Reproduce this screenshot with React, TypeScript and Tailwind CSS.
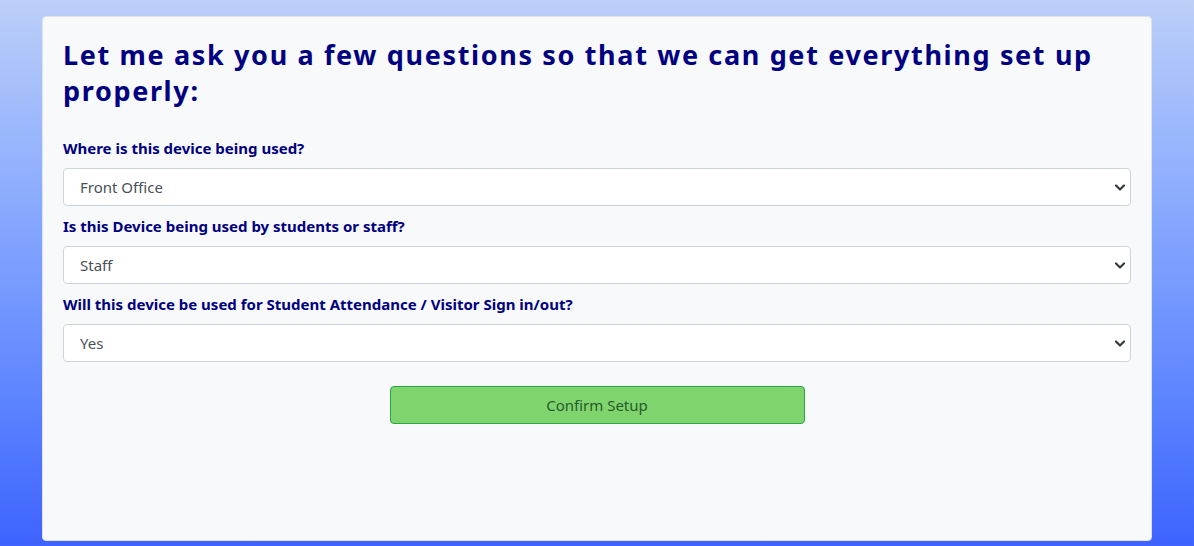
import React from "react";

const Chevron = () => (
  <svg width="12" height="9" viewBox="0 0 12 9" className="shrink-0">
    <path d="M2 2.5l4 4 4-4" fill="none" stroke="#343a40" strokeWidth="2.2" strokeLinecap="round" strokeLinejoin="round" />
  </svg>
);

const Field = ({ label, value }: { label: string; value: string }) => (
  <div className="flex flex-col">
    <div className="text-[15px] font-bold text-[#000080] leading-[22px] mb-[9px]">{label}</div>
    <div className="h-[38px] flex items-center justify-between bg-white border border-[#ced4da] rounded-[4px] pl-[16px] pr-[4px]">
      <span className="text-[15px] text-[#495057]">{value}</span>
      <Chevron />
    </div>
  </div>
);

export default function App() {
  return (
    <div
      className="w-[1194px] h-[546px] overflow-hidden bg-gradient-to-b from-[#bccff8] to-[#3f62ff] px-[42px] pt-[16px]"
      style={{ fontFamily: '"Noto Sans", "Open Sans", sans-serif' }}
    >
      <div className="h-[525px] bg-[#f8f9fa] border border-[#dee2e6] rounded-[4px] pl-[20px] pr-[20px] pt-[20px]">
        <h1 className="text-[27px] font-bold text-[#000080] leading-[36px] tracking-[1.65px] mb-[28px]">
          Let me ask you a few questions so that we can get everything set up properly:
        </h1>
        <div className="flex flex-col gap-[9px]">
          <Field label="Where is this device being used?" value="Front Office" />
          <Field label="Is this Device being used by students or staff?" value="Staff" />
          <Field label="Will this device be used for Student Attendance / Visitor Sign in/out?" value="Yes" />
        </div>
        <div className="flex justify-center mt-[24px]">
          <div className="w-[415px] h-[38px] flex items-center justify-center bg-[#80d46e] border border-[#28a745] rounded-[4px] text-[15px] text-[#265c2b]">
            Confirm Setup
          </div>
        </div>
      </div>
    </div>
  );
}
